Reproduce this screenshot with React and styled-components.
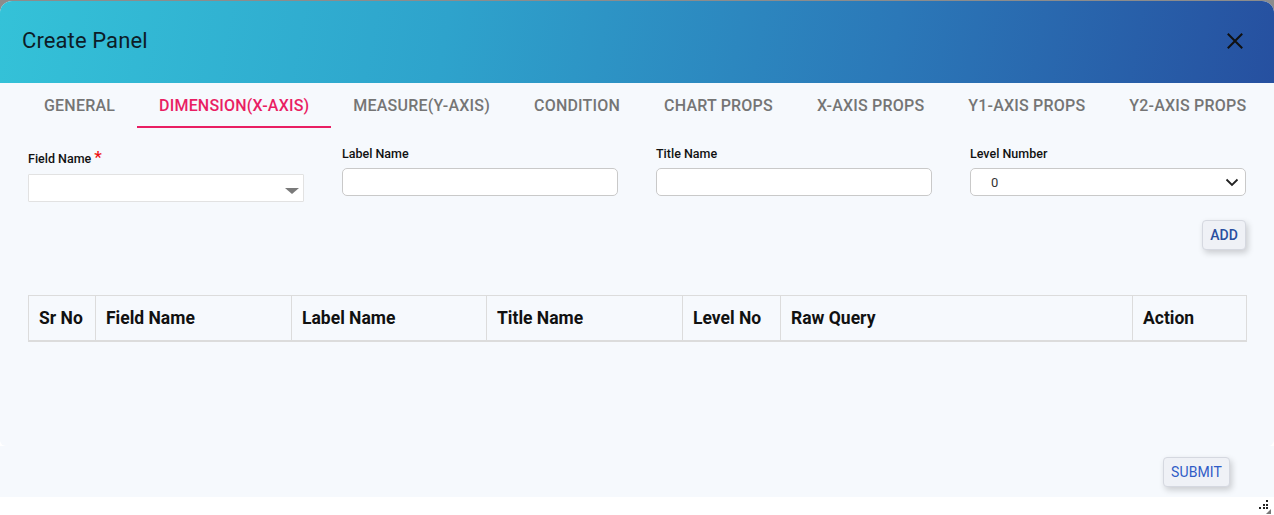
import React from "react";
import styled, { createGlobalStyle } from "styled-components";

const Global = createGlobalStyle`
  html, body { margin: 0; padding: 0; }
  body {
    background: #8c8c8c;
    font-family: Roboto, "Noto Sans", "Liberation Sans", sans-serif;
    overflow: hidden;
  }
  * { box-sizing: border-box; }
`;

const Page = styled.div`
  padding-top: 1px;
  height: 515px;
`;

const Modal = styled.div`
  position: relative;
  background: #ffffff;
  border-radius: 12px 12px 0 0;
  overflow: hidden;
  height: 514px;
  display: flex;
  flex-direction: column;
`;

const Header = styled.div`
  height: 82px;
  flex: 0 0 auto;
  display: flex;
  align-items: center;
  justify-content: space-between;
  padding: 0 31px 3px 22px;
  background: linear-gradient(100deg, #34c2d8 0%, #2ea3cc 35%, #2b78b8 70%, #2650a0 100%);
`;

const Title = styled.h2`
  margin: 0;
  font-size: 22px;
  font-weight: 400;
  color: #0d1c27;
  letter-spacing: 0.1px;
`;

const CloseButton = styled.button`
  border: none;
  background: transparent;
  padding: 0;
  width: 16px;
  height: 16px;
  display: flex;
  align-items: center;
  justify-content: center;
  cursor: pointer;
`;

const Body = styled.div`
  background: #f6f9fd;
  border-radius: 0 0 6px 6px;
  height: 363px;
  flex: 0 0 auto;
`;

const TabBar = styled.div`
  display: flex;
  height: 45px;
  padding-left: 22px;
`;

const Tab = styled.div`
  position: relative;
  display: flex;
  align-items: center;
  padding: 0 22px 1px;
  font-size: 16px;
  font-weight: 500;
  letter-spacing: 0.2px;
  text-transform: uppercase;
  color: ${(p) => (p.$active ? "#e91e63" : "#757575")};
  white-space: nowrap;
  cursor: pointer;
  &::after {
    content: "";
    position: absolute;
    left: 0;
    right: 0;
    bottom: 0;
    height: 2px;
    background: ${(p) => (p.$active ? "#e91e63" : "transparent")};
  }
`;

const FormGrid = styled.div`
  display: grid;
  grid-template-columns: repeat(4, 276px);
  column-gap: 38px;
  padding: 19px 28px 0;
`;

const Field = styled.div`
  display: flex;
  flex-direction: column;
  margin-top: ${(p) => (p.$offset ? "5px" : "0")};
`;

const Label = styled.label`
  font-size: 12.5px;
  font-weight: 500;
  line-height: 14px;
  color: #111;
  margin-bottom: ${(p) => (p.$offset ? "8px" : "7px")};
  display: flex;
  align-items: flex-start;
`;

const Star = styled.span`
  color: #ee1111;
  font-size: 17px;
  line-height: 12px;
  margin-left: 3px;
  margin-top: -1px;
`;

const TextInput = styled.input`
  height: 28px;
  border: 1px solid #c9c9c9;
  border-radius: 5px;
  background: #fff;
  padding: 0 10px;
  font-family: inherit;
  font-size: 13px;
  outline: none;
`;

const PlainSelect = styled.div`
  position: relative;
  height: 28px;
  border: 1px solid #e2e2e2;
  border-radius: 1px;
  background: #fff;
`;

const Caret = styled.span`
  position: absolute;
  right: 4px;
  top: 13px;
  width: 0;
  height: 0;
  border-left: 7px solid transparent;
  border-right: 7px solid transparent;
  border-top: 6px solid #7a7a7a;
`;

const NativeSelect = styled.div`
  height: 28px;
  border: 1px solid #c9c9c9;
  border-radius: 5px;
  background: #fff;
  display: flex;
  align-items: center;
  justify-content: space-between;
  padding: 0 6px 0 20px;
  font-size: 13px;
  color: #333;
`;

const ActionRow = styled.div`
  display: flex;
  justify-content: flex-end;
  padding: ${(p) => p.$pad};
`;

const SoftButton = styled.button`
  height: 30px;
  padding: 0 7px;
  border: 1px solid #d5d8e0;
  border-radius: 4px;
  background: #eff1f6;
  color: ${(p) => p.$color || "#2a4ea0"};
  font-family: inherit;
  font-size: 14px;
  font-weight: ${(p) => p.$weight || 500};
  letter-spacing: 0.1px;
  box-shadow: 2px 3px 6px rgba(0, 0, 0, 0.18);
  cursor: pointer;
`;

const TableWrap = styled.div`
  padding: 45px 28px 0;
`;

const Table = styled.table`
  width: 1218px;
  border-collapse: collapse;
  table-layout: fixed;
`;

const Th = styled.th`
  height: 45px;
  border: 1px solid #dcdcdc;
  border-bottom: 2px solid #dcdcdc;
  text-align: left;
  padding: 1px 10px 0;
  font-size: 17.5px;
  font-weight: 700;
  color: #111;
  white-space: nowrap;
`;

const Footer = styled.div`
  background: #f6f9fd;
  height: 51px;
  flex: 0 0 auto;
`;

const Grip = styled.div`
  position: absolute;
  right: 3px;
  bottom: 1px;
  width: 16px;
  height: 16px;
`;

const tabs = [
  "General",
  "Dimension(X-Axis)",
  "Measure(Y-Axis)",
  "Condition",
  "Chart Props",
  "X-Axis Props",
  "Y1-Axis Props",
  "Y2-Axis Props",
];

const columns = [
  ["Sr No", 67],
  ["Field Name", 196],
  ["Label Name", 195],
  ["Title Name", 196],
  ["Level No", 98],
  ["Raw Query", 352],
  ["Action", 114],
];

export default function App() {
  return (
    <>
      <Global />
      <Page>
        <Modal>
          <Header>
            <Title>Create Panel</Title>
            <CloseButton aria-label="close">
              <svg width="16" height="16" viewBox="0 0 16 16">
                <path d="M1.5 1.5 L14.5 14.5 M14.5 1.5 L1.5 14.5" stroke="#111" strokeWidth="2" strokeLinecap="square" />
              </svg>
            </CloseButton>
          </Header>
          <Body>
            <TabBar>
              {tabs.map((t, i) => (
                <Tab key={t} $active={i === 1}>
                  {t}
                </Tab>
              ))}
            </TabBar>
            <FormGrid>
              <Field $offset>
                <Label $offset>
                  Field Name<Star>*</Star>
                </Label>
                <PlainSelect>
                  <Caret />
                </PlainSelect>
              </Field>
              <Field>
                <Label>Label Name</Label>
                <TextInput />
              </Field>
              <Field>
                <Label>Title Name</Label>
                <TextInput />
              </Field>
              <Field>
                <Label>Level Number</Label>
                <NativeSelect>
                  <span>0</span>
                  <svg width="14" height="10" viewBox="0 0 14 10">
                    <path d="M1.5 2.5 L7 8 L12.5 2.5" fill="none" stroke="#222" strokeWidth="1.8" />
                  </svg>
                </NativeSelect>
              </Field>
            </FormGrid>
            <ActionRow $pad="18px 28px 0 0">
              <SoftButton>ADD</SoftButton>
            </ActionRow>
            <TableWrap>
              <Table>
                <colgroup>
                  {columns.map(([c, w]) => (
                    <col key={c} style={{ width: w }} />
                  ))}
                </colgroup>
                <thead>
                  <tr>
                    {columns.map(([c]) => (
                      <Th key={c}>{c}</Th>
                    ))}
                  </tr>
                </thead>
              </Table>
            </TableWrap>
          </Body>
          <Footer>
            <ActionRow $pad="11px 44px 0 0">
              <SoftButton $color="#2f5cc6" $weight={400}>SUBMIT</SoftButton>
            </ActionRow>
          </Footer>
          <Grip>
            <svg width="16" height="16" viewBox="0 0 16 16">
              <rect x="11" y="2" width="2" height="2" fill="#222" />
              <rect x="8" y="6" width="2" height="2" fill="#222" />
              <rect x="11" y="6" width="2" height="2" fill="#222" />
              <rect x="4" y="9" width="2" height="2" fill="#222" />
              <rect x="8" y="9" width="2" height="2" fill="#222" />
              <rect x="11" y="9" width="2" height="2" fill="#222" />
              <path d="M16 11 L16 16 L11 16 Z" fill="#777" />
            </svg>
          </Grip>
        </Modal>
      </Page>
    </>
  );
}
